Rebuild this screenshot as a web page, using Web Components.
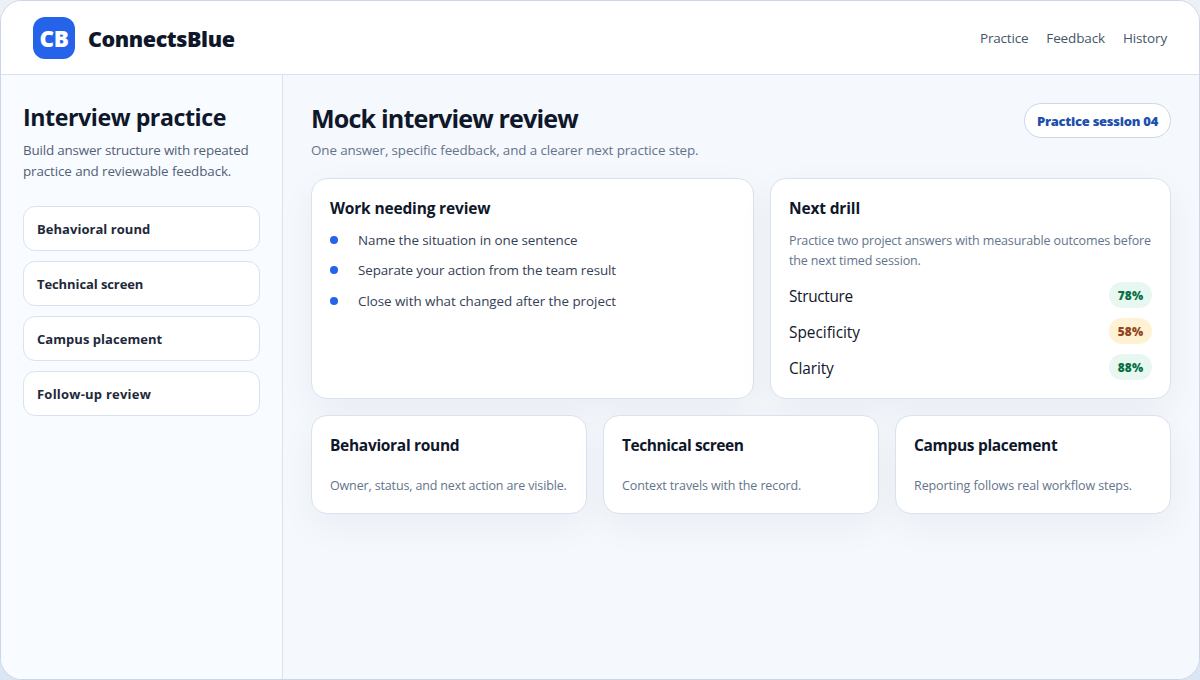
<!DOCTYPE html>
<html lang="en">
<head>
<meta charset="utf-8">
<title>ConnectsBlue</title>
<style>
html,body{margin:0;height:100%}
body{background:linear-gradient(180deg,#edf1f6,#dbe6f4);font-family:"Segoe UI","Open Sans","Noto Sans",sans-serif;color:#0f172a;overflow:hidden}
</style>
</head>
<body>
<cb-app></cb-app>
<script>
const define = (name, html, after) => customElements.define(name, class extends HTMLElement {
  connectedCallback() {
    if (!this.shadowRoot) {
      const t = document.createElement('template');
      t.innerHTML = html;
      this.attachShadow({mode: 'open'}).append(t.content.cloneNode(true));
    }
    if (after) after(this);
  }
});

/* One line of text, tracked so that it takes up the given width. */
define('cb-text', `<style>:host{display:block;white-space:nowrap;width:max-content}</style><slot></slot>`, el => {
  const want = parseFloat(el.getAttribute('w'));
  const n = el.textContent.length;
  if (!want || !n) return;
  el.style.letterSpacing = '0px';
  const have = el.getBoundingClientRect().width;
  el.style.letterSpacing = ((want - have) / n).toFixed(3) + 'px';
});

define('cb-brand', `<style>
:host{display:flex;align-items:center;gap:13px}
.mark{width:42px;height:42px;border-radius:12px;background:#2563eb;color:#fff;display:flex;justify-content:center;font-family:"Noto Sans","Open Sans",sans-serif;font-size:22.5px;font-weight:900;line-height:44px}
.name{font-family:"Noto Sans","Open Sans",sans-serif;font-size:21.5px;font-weight:900;line-height:42px;padding-top:2px;margin-bottom:-1px}
</style><div class="mark"><cb-text w="29">CB</cb-text></div><cb-text class="name" w="146.5">ConnectsBlue</cb-text>`);

define('cb-header', `<style>
:host{display:flex;align-items:center;justify-content:space-between;height:73px;padding:0 32px;background:#fff;border-bottom:1px solid #d8e2f0;box-sizing:content-box}
cb-brand{height:42px}
nav{display:flex;gap:18px;font-size:13.5px;line-height:20px;color:#475569}
</style><cb-brand></cb-brand><nav><cb-text w="48.3">Practice</cb-text><cb-text w="58.7">Feedback</cb-text><cb-text w="44">History</cb-text></nav>`);

define('cb-side-item', `<style>
:host{display:block;box-sizing:border-box;height:45px;padding:0 13px;border:1px solid #d8e2f0;border-radius:12px;background:#fff;color:#1e293b;font-size:13px;font-weight:700;line-height:45px}
</style><slot></slot>`);

define('cb-sidebar', `<style>
:host{display:block;box-sizing:border-box;width:282px;padding:26px 22px;background:#f8fbff;border-right:1px solid #d8e2f0}
.h{font-size:23.2px;font-weight:700;line-height:33px;margin-bottom:-1px}
.p{margin:7px 0 24px;font-size:13.4px;line-height:21px;color:#526176}
.list{display:grid;gap:10px}
</style>
<cb-text class="h" w="203">Interview practice</cb-text>
<div class="p"><cb-text w="225.5">Build answer structure with repeated</cb-text><cb-text w="208.3">practice and reviewable feedback.</cb-text></div>
<div class="list">
<cb-side-item><cb-text w="113.3">Behavioral round</cb-text></cb-side-item>
<cb-side-item><cb-text w="106.3">Technical screen</cb-text></cb-side-item>
<cb-side-item><cb-text w="125.3">Campus placement</cb-text></cb-side-item>
<cb-side-item><cb-text w="114">Follow-up review</cb-text></cb-side-item>
</div>`);

define('cb-card', `<style>
:host{display:block;box-sizing:border-box;padding:18px;border:1px solid #d8e2f0;border-radius:16px;background:#fff;box-shadow:0 12px 36px rgba(15,23,42,.05)}
.t{font-size:15.5px;font-weight:700;line-height:22px;height:22px}
</style><div class="t"><slot name="title"></slot></div><slot></slot>`);

define('cb-bullet', `<style>
:host{display:flex;align-items:center;gap:20px;font-size:13.4px;line-height:20.4px;color:#334155}
i{width:8px;height:8px;margin-bottom:.4px;border-radius:50%;background:#2563eb}
</style><i></i><slot></slot>`);

define('cb-score', `<style>
:host{display:flex;justify-content:space-between;font-size:15.4px;line-height:30px;height:26px}
.pill{box-sizing:border-box;width:43px;height:26px;border-radius:13px;display:flex;justify-content:center;font-size:11.8px;font-weight:800;line-height:26px;background:#e8f7f0;color:#087047}
:host([warn]) .pill{background:#fff2d3;color:#92451c}
</style><slot></slot><div class="pill"><slot name="value"></slot></div>`);

define('cb-main', `<style>
:host{display:block;flex:1;padding:26px 28px;background:#f5f8fd;box-sizing:border-box}
header{display:flex;justify-content:space-between;align-items:flex-start;margin-bottom:17px}
.h{font-size:25.1px;font-weight:700;line-height:34px}
.s{margin-top:5px;font-size:13.4px;line-height:21px;color:#64748b}
.badge{box-sizing:border-box;width:147px;height:35px;margin-top:2px;border:1px solid #cbd8ea;border-radius:18px;background:#fff;color:#1d4fae;display:flex;justify-content:center;font-size:13px;font-weight:800;line-height:34px}
.top{display:grid;grid-template-columns:443px 401px;gap:16px;height:221px;margin-bottom:16px}
.bottom{display:grid;grid-template-columns:repeat(3,1fr);gap:16px}
.bottom cb-card{height:99px}
.bullets{display:grid;gap:10px;margin-top:11px}
.d{font-size:12.5px;line-height:20px;color:#64748b;margin-top:12px}
.bottom .d{margin-top:20px}
.scores{display:grid;gap:10px;margin-top:11px}
</style>
<header>
<div><cb-text class="h" w="267">Mock interview review</cb-text><cb-text class="s" w="387.5">One answer, specific feedback, and a clearer next practice step.</cb-text></div>
<div class="badge"><cb-text w="121">Practice session 04</cb-text></div>
</header>
<div class="top">
<cb-card><cb-text slot="title" w="160.3">Work needing review</cb-text>
<div class="bullets">
<cb-bullet><cb-text w="219.5">Name the situation in one sentence</cb-text></cb-bullet>
<cb-bullet><cb-text w="258">Separate your action from the team result</cb-text></cb-bullet>
<cb-bullet><cb-text w="258">Close with what changed after the project</cb-text></cb-bullet>
</div></cb-card>
<cb-card><cb-text slot="title" w="71">Next drill</cb-text>
<div class="d"><cb-text w="362">Practice two project answers with measurable outcomes before</cb-text><cb-text w="131.7">the next timed session.</cb-text></div>
<div class="scores">
<cb-score><cb-text w="63.7">Structure</cb-text><cb-text slot="value" w="25.5">78%</cb-text></cb-score>
<cb-score warn><cb-text w="71">Specificity</cb-text><cb-text slot="value" w="25.5">58%</cb-text></cb-score>
<cb-score><cb-text w="44.7">Clarity</cb-text><cb-text slot="value" w="25.5">88%</cb-text></cb-score>
</div></cb-card>
</div>
<div class="bottom">
<cb-card><cb-text slot="title" w="129.3">Behavioral round</cb-text><div class="d"><cb-text w="236.7">Owner, status, and next action are visible.</cb-text></div></cb-card>
<cb-card><cb-text slot="title" w="121.5">Technical screen</cb-text><div class="d"><cb-text w="179.2">Context travels with the record.</cb-text></div></cb-card>
<cb-card><cb-text slot="title" w="143.3">Campus placement</cb-text><div class="d"><cb-text w="218">Reporting follows real workflow steps.</cb-text></div></cb-card>
</div>`);

define('cb-app', `<style>
:host{display:flex;flex-direction:column;box-sizing:border-box;width:1200px;height:680px;border:1px solid #cbd6e8;border-radius:22px;overflow:hidden;background:#f8fbff}
.body{display:flex;flex:1}
</style><cb-header></cb-header><div class="body"><cb-sidebar></cb-sidebar><cb-main></cb-main></div>`);
</script>
</body>
</html>
